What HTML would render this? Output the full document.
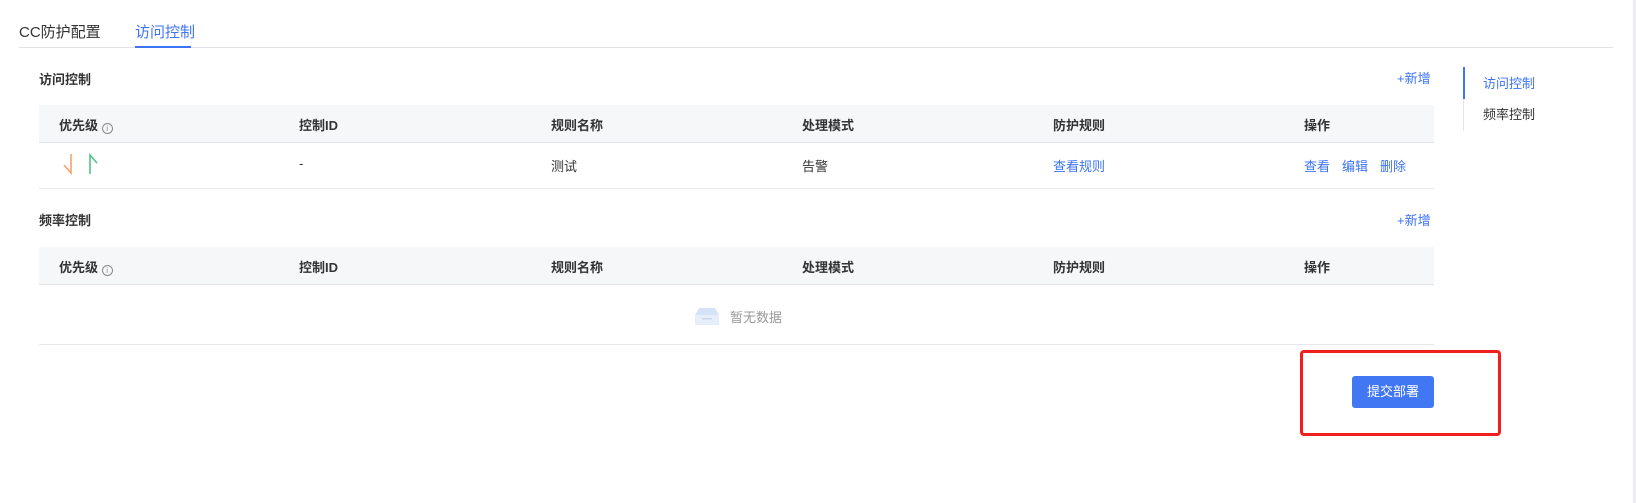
<!DOCTYPE html>
<html><head><meta charset="utf-8"><style>
*{margin:0;padding:0;box-sizing:border-box}
body{width:1636px;height:503px;background:#fff;font-family:"Liberation Sans","Noto Sans CJK SC",sans-serif;color:#333;position:relative;overflow:hidden}
.a{position:absolute;white-space:nowrap}
.b{color:#3d73f5}
.h{font-weight:bold;font-size:13px;color:#333}
.t{font-size:13px}
</style></head><body>
<div class="a" style="left:1633px;top:0;width:3px;height:503px;background:#ececf2"></div>
<div class="a" style="left:19px;top:21px;font-size:15px;color:#333">CC防护配置</div>
<div class="a b" style="left:135px;top:21px;font-size:15px">访问控制</div>
<div class="a" style="left:19px;top:47px;width:1594px;height:1px;background:#e2e2ea"></div>
<div class="a" style="left:135px;top:46px;width:56px;height:2px;background:#3d73f5"></div>

<div class="a h" style="left:39px;top:69px">访问控制</div>
<div class="a b t" style="left:1397px;top:68px">+新增</div>
<div class="a" style="left:39px;top:105px;width:1395px;height:38px;background:#f6f7f9;border-bottom:1px solid #e3e4ea"></div>
<div class="a" style="left:39px;top:188px;width:1395px;height:1px;background:#e6e7ec"></div>

<div class="a h" style="left:39px;top:210px">频率控制</div>
<div class="a b t" style="left:1397px;top:210px">+新增</div>
<div class="a" style="left:39px;top:247px;width:1395px;height:38px;background:#f6f7f9;border-bottom:1px solid #e3e4ea"></div>
<div class="a" style="left:39px;top:344px;width:1395px;height:1px;background:#e6e7ec"></div>

<div class="a h" style="left:59px;top:115px">优先级 <span style="display:inline-block;width:11px;height:11px;border:1px solid #888;border-radius:50%;font-size:8px;line-height:9px;text-align:center;font-weight:normal;color:#888;vertical-align:-1px">i</span></div>
<div class="a h" style="left:299px;top:115px">控制ID</div>
<div class="a h" style="left:551px;top:115px">规则名称</div>
<div class="a h" style="left:802px;top:115px">处理模式</div>
<div class="a h" style="left:1053px;top:115px">防护规则</div>
<div class="a h" style="left:1304px;top:115px">操作</div>

<svg class="a" style="left:62px;top:153px" width="40" height="22"><path d="M9 1 V20 L2 12" stroke="#f6a36a" stroke-width="1.6" fill="none"/><path d="M28 21 V2 L35 10" stroke="#4fc28a" stroke-width="1.6" fill="none"/></svg>
<div class="a t" style="left:299px;top:156px">-</div>
<div class="a t" style="left:551px;top:156px">测试</div>
<div class="a t" style="left:802px;top:156px">告警</div>
<div class="a b t" style="left:1053px;top:156px">查看规则</div>
<div class="a b t" style="left:1304px;top:156px">查看</div>
<div class="a b t" style="left:1342px;top:156px">编辑</div>
<div class="a b t" style="left:1380px;top:156px">删除</div>

<div class="a h" style="left:59px;top:257px">优先级 <span style="display:inline-block;width:11px;height:11px;border:1px solid #888;border-radius:50%;font-size:8px;line-height:9px;text-align:center;font-weight:normal;color:#888;vertical-align:-1px">i</span></div>
<div class="a h" style="left:299px;top:257px">控制ID</div>
<div class="a h" style="left:551px;top:257px">规则名称</div>
<div class="a h" style="left:802px;top:257px">处理模式</div>
<div class="a h" style="left:1053px;top:257px">防护规则</div>
<div class="a h" style="left:1304px;top:257px">操作</div>

<svg class="a" style="left:694px;top:307px" width="26" height="18"><path d="M5 1 H21 L25 8 H1 Z" fill="#d5e3f7"/><rect x="1" y="8" width="24" height="10" fill="#e6eefa"/><rect x="8" y="11" width="10" height="1.5" fill="#c8d6ec"/></svg>
<div class="a t" style="left:730px;top:307px;color:#999">暂无数据</div>

<div class="a" style="left:1463px;top:67px;width:1px;height:64px;background:#e4e4ea"></div>
<div class="a" style="left:1463px;top:67px;width:2px;height:32px;background:#3d73f5"></div>
<div class="a b t" style="left:1483px;top:73px">访问控制</div>
<div class="a t" style="left:1483px;top:104px">频率控制</div>

<div class="a" style="left:1300px;top:350px;width:201px;height:86px;border:3px solid #f01e1e;border-radius:4px"></div>
<div class="a" style="left:1352px;top:376px;width:82px;height:32px;background:#4277f4;border-radius:3px;color:#fff;font-size:13px;text-align:center;line-height:32px">提交部署</div>
</body></html>
